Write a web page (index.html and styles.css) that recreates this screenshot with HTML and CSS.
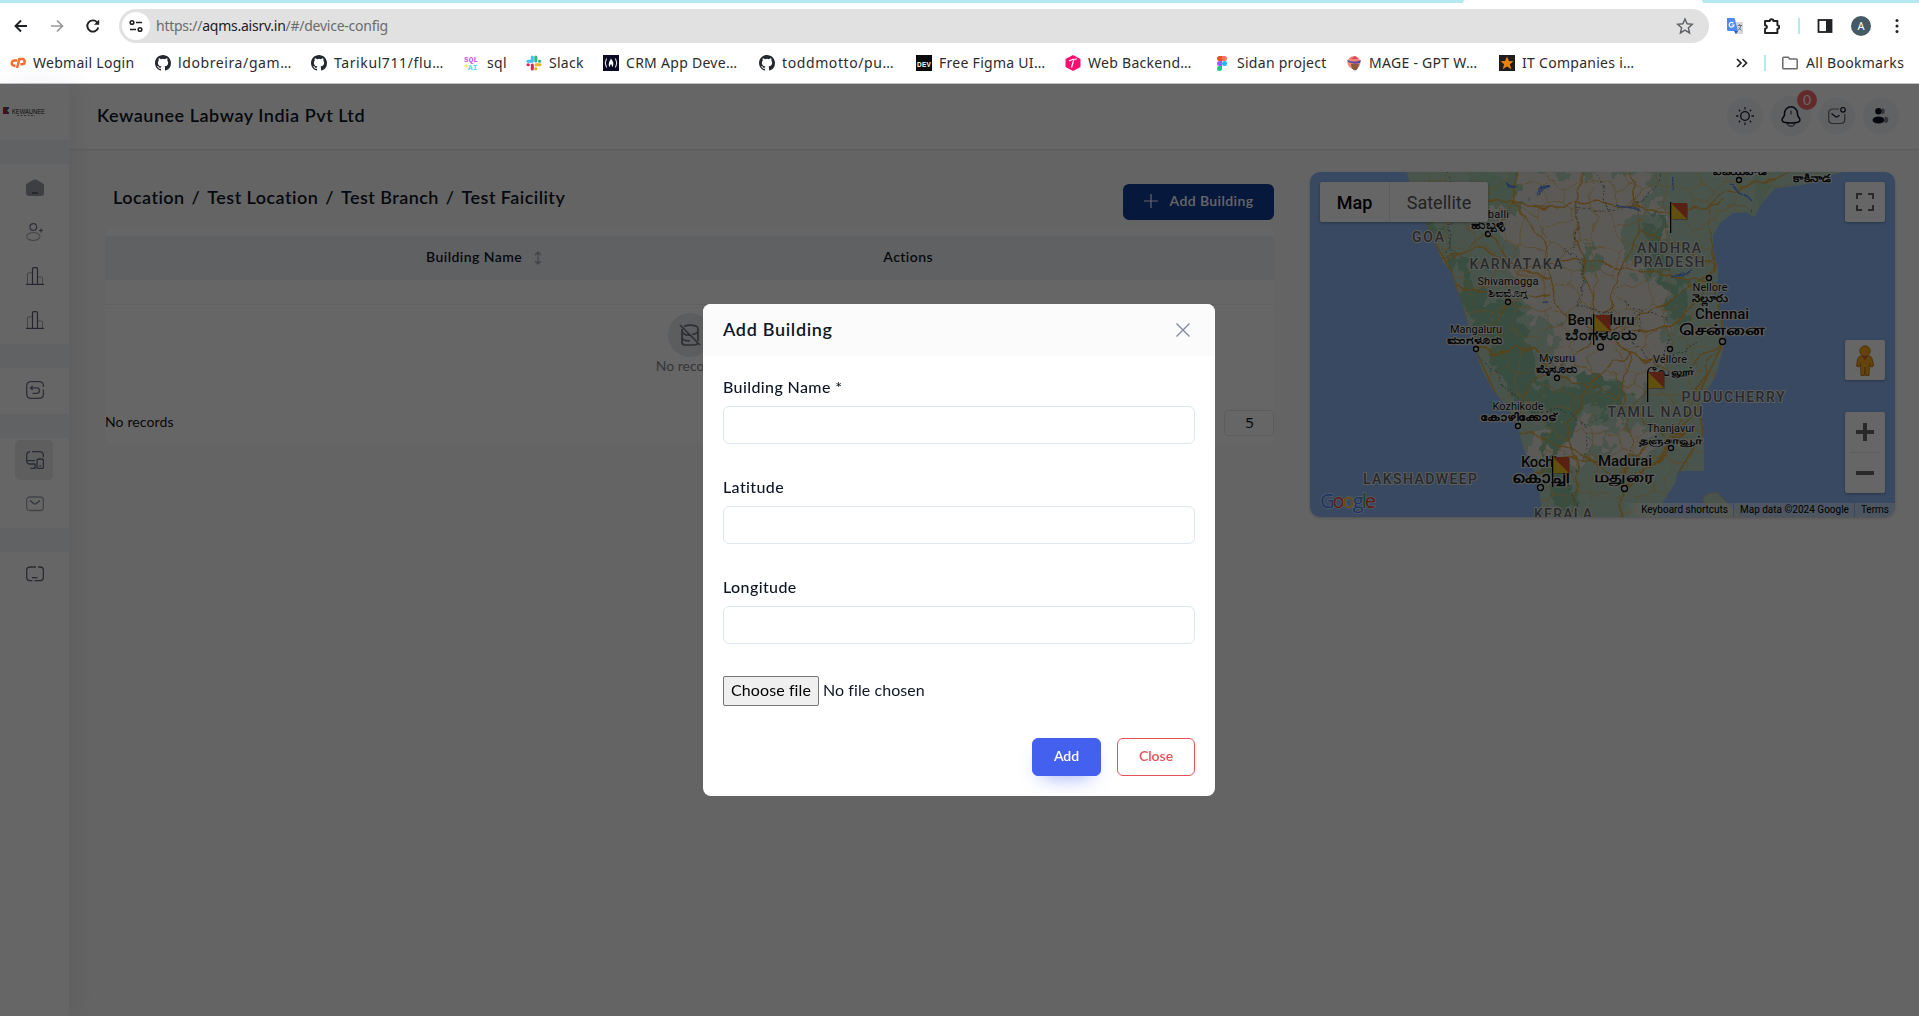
FILE: index.html
```html
<!DOCTYPE html>
<html lang="en">
<head>
<meta charset="utf-8">
<title>Device config</title>
<link rel="stylesheet" href="styles.css">
</head>
<body>
<svg class="defs" width="0" height="0" aria-hidden="true">
  <symbol id="github" viewBox="0 0 16 16"><path fill="#24292f" fill-rule="evenodd" d="M8 0C3.58 0 0 3.58 0 8c0 3.54 2.29 6.53 5.47 7.59.4.07.55-.17.55-.38 0-.19-.01-.82-.01-1.49-2.01.37-2.53-.49-2.69-.94-.09-.23-.48-.94-.82-1.13-.28-.15-.68-.52-.01-.53.63-.01 1.08.58 1.23.82.72 1.21 1.87.87 2.33.66.07-.52.28-.87.51-1.07-1.78-.2-3.64-.89-3.64-3.95 0-.87.31-1.59.82-2.15-.08-.2-.36-1.02.08-2.12 0 0 .67-.21 2.2.82a7.6 7.6 0 0 1 4 0c1.53-1.04 2.2-.82 2.2-.82.44 1.1.16 1.92.08 2.12.51.56.82 1.27.82 2.15 0 3.07-1.87 3.75-3.65 3.95.29.25.54.73.54 1.48 0 1.07-.01 1.93-.01 2.2 0 .21.15.46.55.38A8 8 0 0 0 16 8c0-4.42-3.58-8-8-8z"/></symbol>
  <symbol id="bars" viewBox="0 0 18 18"><g fill="none" stroke="#5b5e70"><path d="M0 17.4h18" stroke-width="1.2"/><path d="M6.5 17V2q0-1.4 1.4-1.4h2.2q1.4 0 1.4 1.4v15" stroke-width="1.2"/><path opacity=".55" d="M1.5 17V7q0-1.2 1.2-1.2h3.8M11.500 10h3.800q1.200 0 1.200 1.200V17"/></g></symbol>
  <symbol id="flag" viewBox="0 0 20 32"><path d="M3 2h15v16H3z" fill="#8b4a30" opacity=".45"/><path d="M1 1h16v16H1z" fill="#f2c62a"/><path d="M1 1h16v16z" fill="#dc5430"/><path d="M.6 0v31" stroke="#000" stroke-width="1.3"/></symbol>
</svg>

<header class="browser">
  <div class="tabstrip"><span class="active-tab"></span></div>
  <div class="toolbar">
    <svg class="nav-icon" viewBox="0 0 16 16"><path d="M14 8H3M8 2.500 2.500 8 8 13.500" fill="none" stroke="#202124" stroke-width="1.900"/></svg>
    <svg class="nav-icon" viewBox="0 0 16 16"><path d="M2 8h11M8 2.500 13.500 8 8 13.500" fill="none" stroke="#9a9a9a" stroke-width="1.700"/></svg>
    <svg class="nav-icon" viewBox="0 0 16 16"><path d="M13.300 9.500A5.600 5.600 0 1 1 12 4.200l1.500 1.500" fill="none" stroke="#202124" stroke-width="1.900"/><path d="M14.200 1.500V6.700H9z" fill="#202124"/></svg>
    <div class="omnibox">
      <span class="site-info"><svg width="14" height="14" viewBox="0 0 14 14" fill="none" stroke="#202124" stroke-width="1.600"><circle cx="3" cy="3.500" r="1.800"/><path d="M7 3.500h6M1 10.500h6"/><circle cx="11" cy="10.500" r="1.800"/></svg></span>
      <span class="url">https://<b>aqms.aisrv.in</b>/#/device-config</span>
      <svg class="star" width="18" height="18" viewBox="0 0 18 18"><path d="m9 2 2.100 4.800 5.200.500-3.900 3.500 1.100 5.100L9 13.200l-4.500 2.700 1.100-5.100L1.700 7.300l5.200-.500z" fill="none" stroke="#5f6368" stroke-width="1.500"/></svg>
    </div>
    <div class="extensions">
      <svg width="16" height="16" viewBox="0 0 16 16"><path d="M6 4h10v12H8z" fill="#d6d8dc"/><path d="M0 0h7.500L11 13H1.500Q0 13 0 11.500z" fill="#4c8bf5"/><path d="M7 13h4l-2 3z" fill="#2a56c6"/><path d="M6.500 5.200A2.400 2.400 0 1 0 7 7H4.700" fill="none" stroke="#fff" stroke-width="1.200"/><path d="M10.500 7.500H15M12.700 6v1.500M14 7.500q-.5 3-3 5M11.500 9.500l3 3" fill="none" stroke="#6b7480"/></svg>
      <svg width="18" height="18" viewBox="0 0 18 18"><path d="M2 4h4.800a1.800 1.800 0 0 1 3.600 0h4v4.200a1.800 1.800 0 0 1 0 3.600V16H2v-4.200q2-.300 2-1.800T2 8.200z" fill="none" stroke="#202124" stroke-width="1.900" stroke-linejoin="round"/></svg>
      <span class="divider"></span>
      <svg width="16" height="16" viewBox="0 0 16 16"><rect x="1.500" y="2" width="13" height="12" fill="#fff" stroke="#202124" stroke-width="1.800"/><path d="M9 2h6v12H9z" fill="#202124"/></svg>
      <span class="profile">A</span>
      <svg width="4" height="16" viewBox="0 0 4 16" fill="#202124"><circle cx="2" cy="2.500" r="1.500"/><circle cx="2" cy="8" r="1.500"/><circle cx="2" cy="13.500" r="1.500"/></svg>
    </div>
  </div>
  <div class="bookmarks">
    <div class="marks">
      <span class="mark"><svg viewBox="0 0 16 16" fill="none" stroke="#ff6c2c" stroke-width="2.400"><path d="M7 5.500H4.300a2.600 2.600 0 0 0 0 5.200h1.200M7 13 9.300 4H12a2.500 2.500 0 0 1 0 5.300h-1.600"/></svg>Webmail Login</span>
      <span class="mark wide"><svg><use href="#github"/></svg>ldobreira/gam…</span>
      <span class="mark wide"><svg><use href="#github"/></svg>Tarikul711/flu…</span>
      <span class="mark"><svg viewBox="0 0 16 16" class="pixel"><text x="0" y="7" fill="#c84df0">SQL</text><text x="4" y="15" fill="#43d9ee">AI</text><path d="M2 9v4M0 11h4" stroke="#f5e34d"/></svg>sql</span>
      <span class="mark"><svg viewBox="0 0 16 16" stroke-width="3" stroke-linecap="round"><path d="M6.300 2v4" stroke="#36c5f0"/><path d="M2 6.300h4" stroke="#36c5f0"/><path d="M9.800 2v4M13.500 6.300h.3" stroke="#2eb67d"/><path d="M10 9.800h4M9.800 13.500v.4" stroke="#ecb22e"/><path d="M6.300 10v4M2 9.800h.3" stroke="#e01e5a"/></svg>Slack</span>
      <span class="mark"><svg viewBox="0 0 16 16"><path fill="#0a0a23" d="M0 0h16v16H0z"/><path d="M3.500 3.500q-2.500 4.500 0 9M12.500 3.500q2.500 4.500 0 9" fill="none" stroke="#fff"/><path d="M8 3.500q2.600 3 2.300 6-.2 2-1.300 2.500.3-2-1-3-1.300 1-1 3-1.200-.5-1.300-2.500Q6 6.500 8 3.500z" fill="#fff"/></svg>CRM App Deve…</span>
      <span class="mark todd"><svg><use href="#github"/></svg>toddmotto/pu…</span>
      <span class="mark"><svg viewBox="0 0 16 16" class="dev"><path fill="#0a0a0a" d="M0 0h16v16H0z"/><text x="1" y="11.500" textLength="14" lengthAdjust="spacingAndGlyphs" fill="#fff">DEV</text></svg>Free Figma UI…</span>
      <span class="mark"><svg viewBox="0 0 16 16"><path d="m8 0 7.500 4v8L8 16 .5 12V4z" fill="#ff0f73"/><path d="M4 6q3-2 8-2M9 4 6.500 12.500" fill="none" stroke="#fff" stroke-width="1.200"/></svg>Web Backend…</span>
      <span class="mark"><svg viewBox="0 0 16 16"><path d="M8 1H5.500a2.500 2.500 0 0 0 0 5H8z" fill="#f24e1e"/><path d="M8 1h2.500a2.500 2.500 0 0 1 0 5H8z" fill="#ff7262"/><path d="M8 6H5.500a2.500 2.500 0 0 0 0 5H8z" fill="#a259ff"/><circle cx="10.500" cy="8.500" r="2.500" fill="#1abcfe"/><path d="M8 11H5.500A2.500 2.500 0 1 0 8 13.500z" fill="#0acf83"/></svg>Sidan project</span>
      <span class="mark"><svg viewBox="0 0 16 16"><circle cx="8" cy="7.500" r="6.500" fill="#f38a78"/><path d="M1 5q7 3 14 0l-1 3Q8 10 2 7z" fill="#5b4a9c"/><path d="M5 9h8q-1 6-4 6.500-4-1-4-6.500z" fill="#8b5a3c"/><path d="m5 4 4-3 3 3z" fill="#e33f6a"/></svg>MAGE - GPT W…</span>
      <span class="mark"><svg viewBox="0 0 16 16"><path fill="#1e1e1e" d="M0 0h16v16H0z"/><path d="m8 1.500 1.900 4.600 4.600.2-3.600 3 1.400 4.900L8 11.500l-4.300 2.700 1.400-4.900-3.600-3 4.600-.2z" fill="#e8820c"/></svg>IT Companies i…</span>
    </div>
    <svg class="more" width="12" height="10" viewBox="0 0 12 10"><path d="m1 1 4 4-4 4M6.500 1l4 4-4 4" fill="none" stroke="#202124" stroke-width="1.700"/></svg>
    <span class="divider"></span>
    <span class="mark all"><svg viewBox="0 0 16 16"><path d="M.8 3q0-.8.8-.8h4.600l1.700 1.900h6.500q.8 0 .8.800v8q0 .8-.8.800H1.600q-.8 0-.8-.8z" fill="none" stroke="#6b6b6b" stroke-width="1.500"/></svg>All Bookmarks</span>
  </div>
</header>

<div class="app">
  <aside class="sidebar">
    <div class="logo"><svg width="44" height="12" viewBox="0 0 44 12"><path d="M1 2h3v7H1z" fill="#d42027"/><path d="M4 2h3v7H4z" fill="#3d4f94"/><path d="m5 5.500 2-2v4z" fill="#fff"/><text x="10" y="8.500" textLength="33" lengthAdjust="spacingAndGlyphs">KEWAUNEE</text><path d="M15 10.500h18" stroke="#777" stroke-dasharray="2 1.500"/></svg></div>
    <nav class="group first">
      <a class="item"><svg viewBox="0 0 18 18"><path d="M0 6.500Q0 5 1.300 4.300L7.500.8Q9 0 10.500.8l6.200 3.500Q18 5 18 6.500V14q0 3-3 3H3q-3 0-3-3z" fill="#9a9ea8"/><path d="M6 14h6" stroke="#555966" stroke-width="1.600"/></svg></a>
      <a class="item"><svg viewBox="0 0 18 18" fill="none" stroke="#777b88" stroke-width="1.200"><circle cx="7.300" cy="4" r="3.400"/><ellipse cx="7.300" cy="13.500" rx="6.700" ry="4" opacity=".6"/><path d="M15 5.500v4M13 7.500h4"/></svg></a>
      <a class="item"><svg><use href="#bars"/></svg></a>
      <a class="item"><svg><use href="#bars"/></svg></a>
    </nav>
    <nav class="group">
      <a class="item"><svg viewBox="0 0 18 18" fill="none" stroke="#737688" stroke-width="1.300"><path d="M17.400 6V5Q17.400.7 13 .7H5Q.7.700.7 5v8q0 4.300 4.300 4.300h8q4.400 0 4.400-4.300V8.500"/><path d="M6.500 12.300h4.200q2.800 0 2.800-2.700t-2.800-2.700H5M6.700 4.800 4.600 6.900l2.100 2.100"/></svg></a>
    </nav>
    <nav class="group">
      <a class="item active"><svg viewBox="0 0 18 18" fill="none" stroke="#666a80" stroke-width="1.300"><path d="M6 .7h7q4.400 0 4.400 4v1.500M4 .7Q.7 1 .7 4.700V9.500Q.7 13 4 13h5M.7 9.700H9M8 17.300h1.500M4.500 17.300H9V13"/><rect x="11" y="8" width="6.400" height="9.400" rx="1.500"/><path d="M13.300 15h1.800"/></svg></a>
      <a class="item"><svg viewBox="0 0 18 18" fill="none" stroke="#777b88" stroke-width="1.300"><rect x=".7" y="2" width="16.600" height="13.500" rx="3" opacity=".65"/><path d="m4 5.500 4 3.200q1 .7 2 0l4-3.200"/></svg></a>
    </nav>
    <nav class="group last">
      <a class="item"><svg viewBox="0 0 18 18" fill="none" stroke="#666a78" stroke-width="1.300"><path d="M10 2H4.500Q.7 2 .7 5.500v6.500q0 3.500 3.300 3.700h2.500M12 2h2q3.400 0 3.400 3.500v6.500q0 3.700-3.400 3.700H8.500M6 12.700h5.500"/></svg></a>
    </nav>
  </aside>

  <div class="main">
    <header class="topbar">
      <h1>Kewaunee Labway India Pvt Ltd</h1>
      <div class="actions">
        <span class="round"><svg width="18" height="18" viewBox="0 0 18 18" fill="none" stroke="#2e3348" stroke-width="1.300"><circle cx="9" cy="9" r="4.300" stroke="#0e1726"/><path d="M9 0v2.500M9 15.500V18M0 9h2.500M15.500 9H18M2.800 2.800l1.400 1.400M13.800 13.800l1.400 1.400M15.200 2.800l-1.400 1.400M4.200 13.800l-1.400 1.400"/></svg></span>
        <span class="round bell"><svg width="22" height="22" viewBox="0 0 22 22" fill="none" stroke="#0e1726" stroke-width="1.500"><path d="M17.500 8.500v.700q0 1.200.7 2.300l1.200 1.700q1.600 3-1.600 4-6.800 1.700-13.600 0-3.200-1-1.600-4l1.200-1.700q.7-1.100.7-2.300v-.700a6.500 6.700 0 0 1 13 0z"/><path d="M7 18.500q1.300 2.700 4 2.700t4-2.700M11 5.500v4" opacity=".6"/></svg><i class="badge">0</i></span>
        <span class="round"><svg width="18" height="18" viewBox="0 0 18 18" fill="none" stroke="#0e1726" stroke-width="1.200"><path d="M11 2H5Q.7 2 .7 6v6.500q0 4 4.300 4h7.500q4.200 0 4.200-4V7" opacity=".6"/><path d="m3.500 6.500 3.800 3q1.200.9 2.500 0l1.700-1.300"/><circle cx="15" cy="2.800" r="2.300"/></svg></span>
        <span class="round user"><svg width="18" height="18" viewBox="0 0 18 18" fill="#0e1726"><circle cx="7.500" cy="4.300" r="3.300"/><ellipse cx="7.500" cy="13" rx="6" ry="3.600"/><path d="M11 1a3.300 3.300 0 0 1 0 6.500zM13.500 9.500a3.500 3 0 0 1 0 6.500z" opacity=".5"/></svg></span>
      </div>
    </header>

    <main class="content">
      <section class="listing">
        <div class="listing-head">
          <h2>Location<i>/</i>Test Location<i>/</i>Test Branch<i>/</i>Test Faicility</h2>
          <button class="add-building"><svg width="14" height="14" viewBox="0 0 14 14"><path d="M7 0v14M0 7h14" stroke="#fff" stroke-width="1.200"/></svg>Add Building</button>
        </div>
        <div class="panel">
          <div class="thead">
            <span>Building Name<svg width="8" height="14" viewBox="0 0 8 14"><path d="M4 2v10M1 4l3-3 3 3M1 10l3 3 3-3" fill="none" stroke="#a5aab4" stroke-width="1.300"/></svg></span>
            <span class="col-actions">Actions</span>
          </div>
          <div class="spacer-row"></div>
          <div class="empty">
            <span class="empty-icon"><svg width="22" height="22" viewBox="0 0 22 22" fill="none" stroke="#70757e" stroke-width="1.700"><path d="M3 5v13q0 3 3 3h9q3 0 4-2M5 2.500Q10 0 17 2q2 .7 2 3v12M3 8q3 4 9 3M19 7q-1 3-6 3.500M3 15q3 2 8 2M1 1l20 20"/></svg></span>
            <span>No records</span>
          </div>
          <div class="pager"><span>No records</span><span class="page-size">5</span></div>
        </div>
      </section>

      <section class="map">
        <svg class="map-canvas" width="585" height="345" viewBox="0 0 585 345">
          <defs>
            <clipPath id="land"><path d="M97 0l5 20 14 31 9 20 8 19 9 11 4 14 6 16 5 17 9 30 6 20 11 20 14 17 11 20 6 23 9 17 6 21 4 29h116l3-14 13-20 3-12h26l-1-44-3-20 5-14 10-16 8-27 2-17-7-33V98l-5-20V63l7-12 13-10 14-1 7 5 8-14 13-15 27-3 30-10 10-3z"/></clipPath>
            <pattern id="lanes" width="74" height="62" patternUnits="userSpaceOnUse"><path d="M0 12 11 18 20 11 34 17 47 8 60 14 74 12M11 18 14 32 6 43 13 62M34 17 30 29 41 39 37 50 48 62M30 29 14 32M41 39 57 34 60 14M57 34 74 42M0 42 6 43M37 50 13 54M60 62 66 49 57 34M13 0 20 11M48 0 47 8M60 0 60 14" fill="none" stroke="#e3b560" stroke-width=".8"/></pattern>
            <filter id="terrain" x="0" y="0" width="100%" height="100%"><feTurbulence type="fractalNoise" baseFrequency=".07" numOctaves="3" seed="4"/><feDisplacementMap in="SourceGraphic" scale="38" xChannelSelector="R" yChannelSelector="G"/></filter>
            <filter id="winding" x="0" y="0" width="100%" height="100%"><feTurbulence type="fractalNoise" baseFrequency=".05" numOctaves="2" seed="9"/><feDisplacementMap in="SourceGraphic" scale="16" xChannelSelector="R" yChannelSelector="G"/></filter>
          </defs>
          <path d="M0 0h585v345H0z" fill="#8eb6f5"/>
          <g clip-path="url(#land)">
            <path d="M80 0h470v345H80z" fill="#b6d3bf"/>
            <g filter="url(#terrain)">
              <path d="M60-20h500v400H60z" fill="#b6d3bf"/>
              <path d="M175 5l25-5h90l5 20-20 25 8 30-15 22 5 40-25 18-28-13-22-35 8-28-20-30zM262 15l35-15h45l-10 40-25 15 3 30-28 20-15-30zM258 105l50-25 45 42 5 58-32 45-33-20-33-2-20-30zM215 268l30-8 30-15 25 10-15 25-25 15-33-5zM336 28l28 4-3 30-20-3zM325 250l20 15-15 20-30 5-5-20z" fill="#e6e1da"/>
              <path d="M108 30l16 15 8 32 28 10 12 33 25 38 17 20 8 32 20 12-8 22-30-19-20-28-28-60-19-65-28-24zM233 220l30-5 15-20 14 22-25 25-18 40 16 45-13 14-20-40 7-40zM340 40l15 3-2 55 20 17 8 38-15-8-27-45zM185 130l28 8 10 60-15 10-20-30zM280 210l35 5-7 22-25 4z" fill="#8fc4a2"/>
              <path d="M150 0h60v40h-35zM275 70l-5 30 13 6 5-30zM445 2l25 8-24 26z" fill="#a8cfb4"/>
            </g>
            <g filter="url(#winding)">
              <path d="M60-20h500v400H60z" fill="url(#lanes)"/>
              <path d="M208 0l-4 35 28 28 9 50 15 30 34 18 30-12 42-20 41-30-4-65 20-15 48-16 50-12M290 161l-43 38-28 16-15 34M290 161l30 20 52 23 43-38M320 181l-8 50 10 40-7 45-8 29M315 316l52-50 26-32M315 316l-40-34-52-22-15 0M226 300l36-16 50 10M178 62l26-28M178 62l23 30 38 16M178 62l-40 27M247 206l-22-28-59 1M290 161l-10-50-16-50 8-61M290 161l20-60 20-40-10-61M400 110l-38 48-72 3M415 166l-28 48-12 30-18 35-45 35M166 179l32-48 42-10M320 181l-44 28-18 50 10 50-8 36M353 204l-30 28 38 44M290 161l48 30 20-4M130 85l40-8 45 20 60-10 50 10 73 12M116 51l60-20 70 5 40-10 70 15 60-10M146 115l40 6 15 10M330 60l70 30M247 206l43 10 30 20M310 314l10-30 50-22" fill="none" stroke="#e0a63e" stroke-width="1.400"/>
            </g>
            <path d="M102 20l14 31 9 20 17 30 24 78 23 50 19 46 15 40 4 30M403 110l12 56-28 60 6 35-26 42" fill="none" stroke="#e0a63e" stroke-width="1.500"/>
            <g filter="url(#winding)" fill="none">
              <path d="M135 0l10 25-6 38-4 22M170 184l14 14 16 22 30 18 28 3 18 14-4 30-15 18 10 40M253 75l22 20 2 20-14 22 34 0-8 8 18 16M263 77l6-42 30 5-12-40M350 0l-16 30-39 8M313 130l20 12-7 30 20 24M297 137l14 20 18-20 28 10-3 42 34-18" stroke="#67747f" stroke-dasharray="2 2"/>
              <path d="M197 10l14 5-10-1zM226 24l16-8-18 6M308 28l22 12M367 4l-3 15M420 12l18 12 4 15M360 103l22-4M235 130l6-3" stroke="#5f8fe8" stroke-width="1.500"/>
            </g>
          </g>
          <path d="M393 326q4-6 15-5l6 7 10 10 6 7h-28q-2-12-9-15z" fill="#b6d3bf" stroke="#d6b26b" stroke-width=".8"/>
          <g class="cities">
            <g fill="#d8d8d8" stroke="#000" stroke-width="1.300"><circle cx="178" cy="62" r="2.500"/><circle cx="198" cy="130" r="2.500"/><circle cx="166" cy="177" r="2.500"/><circle cx="290.500" cy="175" r="3"/><circle cx="247" cy="206" r="2.500"/><circle cx="208" cy="254" r="2.500"/><circle cx="230.500" cy="315.500" r="3"/><circle cx="399" cy="106" r="2.500"/><circle cx="412.500" cy="169.500" r="3"/><circle cx="360" cy="177" r="2.500"/><circle cx="361" cy="276" r="2.500"/><circle cx="314.500" cy="316.500" r="3"/><circle cx="429" cy="8" r="2.500"/></g>
            <g class="state">
              <text x="118" y="70" textLength="32">GOA</text><text x="206" y="97" textLength="93">KARNATAKA</text>
              <text x="359" y="81" textLength="64">ANDHRA</text><text x="359" y="95" textLength="71">PRADESH</text>
              <text x="423" y="230" textLength="103">PUDUCHERRY</text><text x="345" y="245" textLength="95">TAMIL NADU</text>
              <text x="110" y="312" textLength="114">LAKSHADWEEP</text><text x="253" y="347" textLength="58">KERALA</text>
            </g>
            <g class="town">
              <text x="178" y="46" textLength="42">Hubballi</text><text x="178" y="57" textLength="35" lengthAdjust="spacingAndGlyphs" class="native">ಹುಬ್ಬಳ್ಳಿ</text>
              <text x="198" y="113" textLength="61">Shivamogga</text><text x="198" y="125" textLength="41" lengthAdjust="spacingAndGlyphs">ಶಿವಮೊಗ್ಗ</text>
              <text x="166" y="161" textLength="52">Mangaluru</text><text x="165" y="172" textLength="57" lengthAdjust="spacingAndGlyphs" class="native">ಮಂಗಳೂರು</text>
              <text x="247" y="190" textLength="36">Mysuru</text><text x="247" y="201" textLength="43" lengthAdjust="spacingAndGlyphs" class="native">ಮೈಸೂರು</text>
              <text x="208" y="238" textLength="51">Kozhikode</text><text x="208" y="249" textLength="77" lengthAdjust="spacingAndGlyphs" class="native">കോഴിക്കോട്</text>
              <text x="400" y="119" textLength="35">Nellore</text><text x="400" y="130" textLength="36" lengthAdjust="spacingAndGlyphs" class="native">నెల్లూరు</text>
              <text x="360" y="191" textLength="34">Vellore</text><text x="361" y="203" textLength="48" lengthAdjust="spacingAndGlyphs" class="native">வேலூர்</text>
              <text x="361" y="260" textLength="48">Thanjavur</text><text x="361" y="272" textLength="64" lengthAdjust="spacingAndGlyphs" class="native">தஞ்சாவூர்</text>
              <text x="430" y="3" textLength="54" lengthAdjust="spacingAndGlyphs" class="native">విజయవాడ</text><text x="502" y="10" textLength="38" lengthAdjust="spacingAndGlyphs" class="native">కాకినాడ</text>
            </g>
            <g class="city">
              <text x="291" y="153" textLength="67">Bengaluru</text><text x="291" y="168" textLength="73" lengthAdjust="spacingAndGlyphs" class="native">ಬೆಂಗಳೂರು</text>
              <text x="412" y="147" textLength="54">Chennai</text><text x="412" y="163" textLength="86" lengthAdjust="spacingAndGlyphs" class="native">சென்னை</text>
              <text x="229" y="295" textLength="36">Kochi</text><text x="230" y="311" textLength="57" lengthAdjust="spacingAndGlyphs" class="native">കൊച്ചി</text>
              <text x="315" y="294" textLength="54">Madurai</text><text x="314" y="310" textLength="60" lengthAdjust="spacingAndGlyphs" class="native">மதுரை</text>
            </g>
          </g>
          <use href="#flag" x="360" y="30" width="20" height="32"/><use href="#flag" x="283" y="142" width="20" height="32"/><use href="#flag" x="337" y="199" width="20" height="32"/><use href="#flag" x="242" y="284" width="20" height="32"/>
          <text class="google" x="10" y="336" textLength="56"><tspan fill="#4285f4">G</tspan><tspan fill="#ea4335">o</tspan><tspan fill="#fbbc05">o</tspan><tspan fill="#4285f4">g</tspan><tspan fill="#34a853">l</tspan><tspan fill="#ea4335">e</tspan></text>
        </svg>
        <div class="map-type"><b>Map</b><span>Satellite</span></div>
        <div class="map-controls">
          <span class="ctl"><svg width="18" height="18" viewBox="0 0 18 18"><path d="M1 6V1h5M12 1h5v5M17 12v5h-5M6 17H1v-5" fill="none" stroke="#666" stroke-width="2"/></svg></span>
          <span class="ctl pegman"><svg width="18" height="31" viewBox="0 0 18 31"><path d="M4 11h10q2 1 2.500 4l1 6-2.500 1-1.500-4-.5 12.500H9.700L9 22l-.7 8.500H5L4.500 18 3 22 .5 21l1-6Q2 12 4 11z" fill="#f9ab1c" stroke="#bd7c17"/><circle cx="9" cy="6" r="5.200" fill="#f9ab1c" stroke="#c08520"/><path d="M6 11h6l-3 4.500z" fill="#d96a24"/></svg></span>
          <span class="ctl zoom"><svg width="18" height="18" viewBox="0 0 18 18"><path d="M9 0v18M0 9h18" stroke="#666" stroke-width="4"/></svg><i></i><svg width="18" height="18" viewBox="0 0 18 18"><path d="M0 9h18" stroke="#666" stroke-width="4"/></svg></span>
        </div>
        <div class="attribution"><span>Keyboard shortcuts</span><span>Map data ©2024 Google</span><span>Terms</span></div>
      </section>
    </main>
  </div>
</div>

<div class="overlay">
  <div class="modal">
    <header class="modal-head"><h3>Add Building</h3><svg width="14" height="14" viewBox="0 0 14 14"><path d="m.5.500 13 13M13.500.5l-13 13" stroke="#8288a8" stroke-width="1.400"/></svg></header>
    <form class="modal-body">
      <label>Building Name *<input type="text"></label>
      <label>Latitude<input type="text"></label>
      <label>Longitude<input type="text"></label>
      <div class="file"><span class="choose">Choose file</span><span class="nofile">No file chosen</span></div>
      <div class="buttons"><button type="button" class="primary">Add</button><button type="button" class="danger">Close</button></div>
    </form>
  </div>
</div>
</body>
</html>
```
FILE: styles.css
```css
* { box-sizing: border-box; }
body { margin: 0; height: 1016px; overflow: hidden; background: #fafafa; color: #0e1726; font: 400 14px/20px Lato, "Noto Sans", sans-serif; display: flex; flex-direction: column; }
h1, h2, h3 { margin: 0; font-weight: 600; font-size: 18px; line-height: 28px; letter-spacing: .53px; }
i { font-style: normal; }
button { font: inherit; }
.defs { position: absolute; }

/* browser frame */
.browser { height: 84px; flex: none; background: #fff; border-bottom: 1px solid #c4c4c4; font-family: "Noto Sans", sans-serif; color: #2b2c2e; }
.tabstrip { height: 3px; background: #b5e9f2; display: flex; padding-left: 1463px; }
.active-tab { width: 240px; background: #fff; border-radius: 3px 3px 0 0; }
.toolbar { height: 46px; display: flex; align-items: center; padding-left: 13px; }
.nav-icon { width: 16px; height: 16px; margin-right: 20px; flex: none; }
.omnibox { margin-left: -2px; width: 1590px; height: 34px; border-radius: 17px; background: #e1e1e1; display: flex; align-items: center; padding: 0 15px 0 3px; }
.site-info { width: 28px; height: 28px; border-radius: 50%; background: #fff; display: flex; align-items: center; justify-content: center; }
.url { margin-left: 6px; font-size: 14px; color: #6a6b6d; letter-spacing: -.25px; }
.url b { font-weight: 400; color: #202124; }
.star { margin-left: auto; }
.extensions { display: flex; align-items: center; margin-left: 18px; }
.extensions > :nth-child(2) { margin-left: 20px; }
.extensions .divider { margin: 0 17px; }
.divider { width: 2px; height: 16px; background: #b5e9f2; }
.profile { width: 20px; height: 20px; margin: 0 24px 0 18px; border-radius: 50%; background: #455a64; color: #fff; font-size: 11px; line-height: 20px; text-align: center; }
.bookmarks { height: 28px; display: flex; align-items: center; padding-left: 10px; }
.marks { display: grid; grid-template-columns: 145px 156px 153px 62px 77px 156px 157px 149px 149px 132px 153px 140px; width: 1629px; }
.mark { display: flex; align-items: center; gap: 7px; font-size: 14px; white-space: nowrap; letter-spacing: .28px; }
.mark.wide { letter-spacing: .6px; }
.mark.todd { letter-spacing: .6px; }
.mark.all { gap: 8px; letter-spacing: .3px; }
.mark svg { width: 16px; height: 16px; flex: none; }
.pixel text { font: 700 7.500px "Liberation Mono", monospace; }
.dev text { font: 700 8px "Liberation Sans", sans-serif; }
.more { margin-left: 97px; }
.bookmarks .divider { margin: 0 16px 0 16px; }

/* shell */
.app { flex: 1; display: flex; min-height: 0; }
.sidebar { position: relative; z-index: 1; width: 69px; flex: none; background: #fff; box-shadow: 5px 0 25px rgba(94, 92, 154, .1); }
.logo { height: 56px; padding: 18px 0 0 2px; }
.logo svg { overflow: visible; }
.logo text { font: 400 8px "Liberation Sans", sans-serif; fill: #222; }
.group { border-top: 24px solid #f1f4f9; padding-bottom: 2px; }
.group.first { padding-top: 2px; }
.item { height: 44px; display: flex; align-items: center; padding-left: 26px; }
.item svg { width: 18px; height: 18px; }
.item.active { height: 40px; margin: 2px 16px 2px 15px; padding-left: 11px; background: #ebebec; border-radius: 5px; }
.main { flex: 1; min-width: 0; }
.topbar { height: 65px; background: #fff; display: flex; align-items: center; justify-content: space-between; padding: 0 20px 1px 28px; box-shadow: 0 1px 2px rgba(0, 0, 0, .1); }
.topbar h1 { padding-bottom: 3px; }
.actions { display: flex; align-items: center; gap: 8px; }
.round { width: 36px; height: 36px; border-radius: 50%; background: #f1f4f9; display: flex; align-items: center; justify-content: center; position: relative; }
.round.bell { width: 40px; height: 40px; }
.round.user { padding-right: 2px; }
.badge { position: absolute; left: 26px; top: -6px; width: 20px; height: 20px; border-radius: 50%; background: #f8696b; color: #fff; text-align: center; line-height: 20px; }

/* listing */
.content { display: flex; gap: 36px; padding: 23px 24px 0 36px; align-items: flex-start; }
.listing { width: 1169px; flex: none; padding-top: 12px; }
.listing-head { height: 44px; display: flex; justify-content: space-between; align-items: flex-start; padding-left: 8px; }
.listing-head h2 { letter-spacing: .45px; margin-top: -1px; }
.listing-head h2 i { margin: 0 7px; }
.add-building { width: 151px; height: 36px; border: 0; border-radius: 6px; background: #113c96; color: #fff; font-weight: 600; display: flex; align-items: center; justify-content: center; gap: 12px; padding: 0 0 2px; letter-spacing: .4px; }
.panel { height: 216px; background: #fff; border-radius: 8px; padding-top: 8px; }
.thead { height: 44px; background: #f0f3f7; display: flex; align-items: center; font-weight: 600; padding: 0 0 2px 321px; letter-spacing: .45px; }
.thead svg { margin-left: 12px; vertical-align: -3px; }
.col-actions { margin-left: 341px; }
.spacer-row { height: 25px; border-bottom: 1px solid #f0f2f5; }
.empty { display: flex; flex-direction: column; align-items: center; padding-top: 8px; color: #888b90; height: 100px; }
.empty-icon { width: 44px; height: 44px; border-radius: 50%; background: #e5e8ee; display: flex; align-items: center; justify-content: center; margin-bottom: -1px; }
.pager { display: flex; justify-content: space-between; align-items: center; padding-top: 5px; letter-spacing: .13px; }
.pager > :first-child { padding-bottom: 2px; }
.page-size { width: 50px; height: 26px; border: 1px solid #e0e6ed; border-radius: 4px; text-align: center; font: 400 15px/23px "Noto Sans", sans-serif; padding-left: 1px; }

/* map */
.map { position: relative; width: 585px; height: 345px; border-radius: 10px; overflow: hidden; font-family: Roboto, sans-serif; box-shadow: 0 1px 3px rgba(0, 0, 0, .2); }
.map-canvas { display: block; }
.cities text { text-anchor: middle; paint-order: stroke; stroke: #e4eae4; stroke-width: 2px; stroke-linejoin: round; fill: #111; }
.town text { font: 400 11px Roboto, sans-serif; }
.city text { font: 500 15px Roboto, sans-serif; }
.cities .native { font-weight: 700; }
.state text { font: 500 14px Roboto, sans-serif; fill: #66686b; }
.google { font: 500 20px "Open Sans", sans-serif; stroke: #d9e6fb; stroke-width: 1.500px; paint-order: stroke; }
.map-type { position: absolute; left: 10px; top: 10px; width: 168px; height: 40px; display: flex; background: #fff; font-size: 18px; line-height: 41px; box-shadow: 0 1px 3px rgba(0, 0, 0, .3); border-radius: 2px; }
.map-type b { width: 70px; text-align: center; font-weight: 500; color: #000; border-right: 1px solid #e6e6e6; }
.map-type span { flex: 1; text-align: center; color: #565656; }
.map-controls { position: absolute; right: 10px; top: 10px; display: flex; flex-direction: column; }
.ctl { width: 40px; height: 40px; background: #fff; border-radius: 2px; display: flex; align-items: center; justify-content: center; box-shadow: 0 1px 3px rgba(0, 0, 0, .3); }
.pegman { margin: 118px 0 32px; }
.zoom { height: 81px; flex-direction: column; gap: 11px; }
.zoom i { width: 30px; height: 1px; background: #e6e6e6; }
.attribution { position: absolute; right: 0; bottom: 0; height: 14px; display: flex; background: linear-gradient(90deg, rgba(245, 245, 245, 0), rgba(245, 245, 245, .5) 16px); padding-left: 12px; font-size: 10px; line-height: 14px; color: #000; }
.attribution span { padding: 0 5.500px; border-right: 1px solid #8eb6f5; }
.attribution span:last-child { border: 0; padding-right: 6px; }

/* dialog */
.overlay { position: fixed; inset: 84px 0 0; background: rgba(0, 0, 0, .6); z-index: 5; display: flex; justify-content: center; align-items: flex-start; padding: 220px 1px 0 0; }
.modal { width: 512px; height: 492px; background: #fff; border-radius: 8px; overflow: hidden; }
.modal-head { height: 52px; background: #fbfbfb; display: flex; align-items: center; justify-content: space-between; padding: 0 25px 0 20px; }
.modal-head h3 { letter-spacing: .68px; padding-bottom: 2px; }
.modal-body { padding: 19px 20px; font-size: 16px; line-height: 24px; }
.modal-body label { display: block; height: 100px; font-weight: 500; letter-spacing: .38px; }
.modal-body input { display: block; width: 100%; height: 38px; margin-top: 7px; border: 1px solid #e0e6ed; border-radius: 6px; outline: 0; background: #fff; }
.file { display: flex; align-items: center; height: 30px; gap: 4px; margin-top: 1px; }
.choose { width: 96px; height: 30px; border: 1px solid #767676; border-radius: 2px; background: #efefef; color: #000; text-align: center; line-height: 26px; letter-spacing: .1px; }
.nofile { letter-spacing: .07px; padding-bottom: 2px; }
.buttons { display: flex; justify-content: flex-end; gap: 16px; margin-top: 32px; font-size: 14px; }
.buttons button { height: 38px; border-radius: 6px; padding: 0 0 2px; font-weight: 600; }
.primary { width: 69px; border: 1px solid #4361ee; background: #4361ee; color: #fff; box-shadow: 0 10px 20px -10px rgba(67, 97, 238, .6); }
.danger { width: 78px; border: 1px solid #e7515a; background: #fff; color: #e7515a; }
```
